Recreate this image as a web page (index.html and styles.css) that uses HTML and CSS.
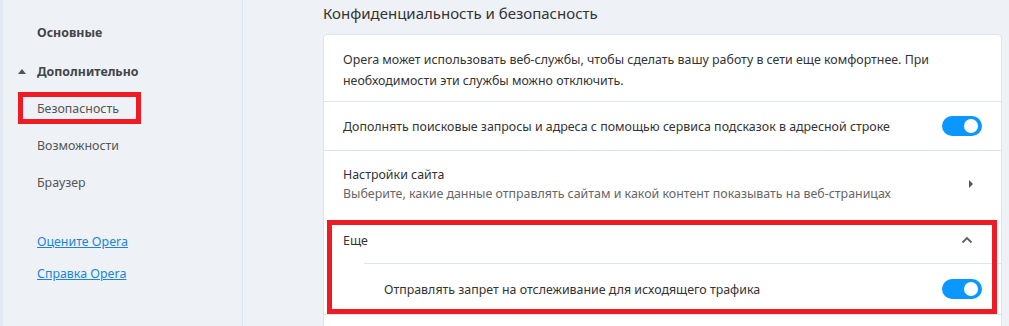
FILE: index.html
```html
<!DOCTYPE html>
<html lang="ru">
  <head>
    <meta charset="UTF-8" />
    <meta name="viewport" content="width=device-width, initial-scale=1.0" />
    <title>Настройки — Безопасность</title>
    <link rel="stylesheet" href="styles.css">
  </head>
  <body>
    <aside class="sidebar">
      <a class="nav-item nav-main" href="#">Основные</a>
      <a class="nav-item nav-main nav-open" href="#"><span class="caret"></span>Дополнительно</a>
      <div class="nav-sub">
        <a class="nav-item marked" href="#">Безопасность</a>
        <a class="nav-item" href="#">Возможности</a>
        <a class="nav-item" href="#">Браузер</a>
      </div>
      <div class="nav-links">
        <a href="#">Оцените Opera</a>
        <a href="#">Справка Opera</a>
      </div>
    </aside>

    <main class="content">
      <h2 class="section-title">Конфиденциальность и безопасность</h2>
      <div class="card">
        <div class="row row-text">
          Opera может использовать веб-службы, чтобы сделать вашу работу в сети еще комфортнее. При
          необходимости эти службы можно отключить.
        </div>

        <div class="row">
          <span>Дополнять поисковые запросы и адреса с помощью сервиса подсказок в адресной строке</span>
          <span class="toggle on"></span>
        </div>

        <div class="row row-double">
          <div>
            <div class="row-title">Настройки сайта</div>
            <div class="row-hint">Выберите, какие данные отправлять сайтам и какой контент показывать на веб-страницах</div>
          </div>
          <span class="arrow-right"></span>
        </div>

        <div class="more marked-block">
          <div class="row row-plain">
            <span>Еще</span>
            <svg class="chevron" width="12" height="8" viewBox="0 0 12 8">
              <path d="M1.5 6.5 L6 2 L10.5 6.5" fill="none" stroke="#5f5f5f" stroke-width="1.8"/>
            </svg>
          </div>
          <div class="row row-nested">
            <span>Отправлять запрет на отслеживание для исходящего трафика</span>
            <span class="toggle on"></span>
          </div>
        </div>
        <div class="row row-empty"></div>
      </div>
    </main>
  </body>
</html>
```

FILE: styles.css
```css
body {
  margin: 0;
  font-family: "Noto Sans", "Open Sans", sans-serif;
  font-size: 12.4px;
  color: #333;
  background-color: #eef2f7;
  display: flex;
  height: 326px;
  overflow: hidden;
}

.sidebar {
  width: 239px;
  flex-shrink: 0;
  border-left: 3px solid #e2e9f2;
  border-right: 1px solid #dbe3ec;
  padding-top: 23px;
  display: flex;
  flex-direction: column;
  position: relative;
}

.nav-item {
  display: block;
  padding-left: 34px;
  line-height: 20px;
  color: #555;
  text-decoration: none;
}

.nav-main {
  font-weight: bold;
  color: #444;
}

.nav-main + .nav-main {
  margin-top: 19px;
  position: relative;
}

.caret {
  position: absolute;
  left: 15px;
  top: 7px;
  border-left: 4px solid transparent;
  border-right: 4px solid transparent;
  border-bottom: 5px solid #555;
}

.nav-sub {
  margin-top: 8px;
}

.nav-sub .nav-item {
  height: 37px;
  line-height: 37px;
}

.nav-sub .marked {
  position: relative;
}

.nav-sub .marked::after {
  content: "";
  position: absolute;
  left: 15px;
  top: 2px;
  width: 113px;
  height: 22px;
  border: 5px solid #ed1c24;
}

.nav-links {
  margin-top: 31px;
  padding-left: 34px;
  display: flex;
  flex-direction: column;
  gap: 12px;
}

.nav-links a {
  line-height: 20px;
  color: #1a84d8;
  text-decoration: underline;
}

.content {
  flex: 1;
  padding: 0 7px 0 80px;
}

.section-title {
  margin: 3px 0 0;
  font-size: 15px;
  font-weight: normal;
  line-height: 20px;
  color: #333;
}

.card {
  margin-top: 11px;
  background: white;
  border: 1px solid #dde4ec;
  border-radius: 4px;
}

.row {
  display: flex;
  justify-content: space-between;
  align-items: center;
  height: 48px;
  padding: 0 19px;
  border-top: 1px solid #dde4ec;
}

.row:first-child {
  border-top: none;
}

.row-text {
  display: block;
  height: auto;
  padding: 14px 19px 10px;
  line-height: 21px;
}

.row-double {
  height: 62px;
  padding-top: 2px;
  line-height: 19px;
}

.row-hint {
  color: #666;
}

.row-plain {
  height: 46px;
  padding-top: 2px;
}

.row-nested {
  margin-left: 40px;
  padding-left: 20px;
  height: 50px;
}

.row-empty {
  height: 20px;
}

.toggle {
  width: 40px;
  height: 20px;
  border-radius: 10px;
  background: #0a97ff;
  position: relative;
  flex-shrink: 0;
}

.toggle.on::after {
  content: "";
  position: absolute;
  right: 4px;
  top: 3px;
  width: 14px;
  height: 14px;
  border-radius: 50%;
  background: white;
}

.arrow-right {
  margin-right: 9px;
  border-top: 4px solid transparent;
  border-bottom: 4px solid transparent;
  border-left: 4px solid #555;
}

.chevron {
  margin-right: 9px;
}

.marked-block {
  position: relative;
}

.marked-block::after {
  content: "";
  position: absolute;
  left: 3px;
  top: 5px;
  right: 4px;
  bottom: 0;
  border: 5px solid #ed1c24;
  pointer-events: none;
}
```
